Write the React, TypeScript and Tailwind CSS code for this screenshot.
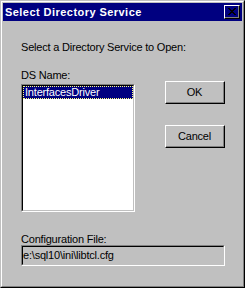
import type { ReactNode } from 'react';

function Button({ children, className = '' }: { children: ReactNode; className?: string }) {
  return (
    <div
      className={`border-t border-l border-t-white border-l-white border-r border-b border-r-black border-b-black ${className}`}
    >
      <div className="flex h-full w-full items-center justify-center border-r border-b border-r-[#808080] border-b-[#808080] text-[11px] tracking-[-0.2px] text-black">
        {children}
      </div>
    </div>
  );
}

function CloseGlyph() {
  // classic 8x7 pixel "x"
  const px: [number, number][] = [
    [0, 0], [1, 0], [6, 0], [7, 0],
    [1, 1], [2, 1], [5, 1], [6, 1],
    [2, 2], [3, 2], [4, 2], [5, 2],
    [3, 3], [4, 3],
    [2, 4], [3, 4], [4, 4], [5, 4],
    [1, 5], [2, 5], [5, 5], [6, 5],
    [0, 6], [1, 6], [6, 6], [7, 6],
  ];
  return (
    <svg width="8" height="7" viewBox="0 0 8 7" shapeRendering="crispEdges">
      {px.map(([x, y]) => (
        <rect key={`${x}-${y}`} x={x} y={y} width="1" height="1" fill="#000" />
      ))}
    </svg>
  );
}

function Sunken({ children, className = '' }: { children: ReactNode; className?: string }) {
  return (
    <div
      className={`border-t border-l border-t-[#808080] border-l-[#808080] border-r border-b border-r-white border-b-white ${className}`}
    >
      <div className="h-full w-full border-t border-l border-t-black border-l-black border-r border-b border-r-[#c0c0c0] border-b-[#c0c0c0]">
        {children}
      </div>
    </div>
  );
}

export default function App() {
  return (
    <div className="h-[288px] w-[245px] font-['Liberation_Sans',Arial,sans-serif]">
      <div className="h-full w-full border-t border-l border-t-[#c0c0c0] border-l-[#c0c0c0] border-r border-b border-r-black border-b-black bg-[#c0c0c0]">
        <div className="flex h-full w-full flex-col border-t border-l border-t-white border-l-white border-r border-b border-r-[#808080] border-b-[#808080] p-px">
          <div className="flex h-[18px] shrink-0 items-center justify-between bg-[#000080] pl-[2px] pr-[2px]">
            <span className="text-[11px] font-bold tracking-[0.45px] text-white">
              Select Directory Service
            </span>
            <Button className="h-[14px] w-[16px]">
              <CloseGlyph />
            </Button>
          </div>

          <div className="flex flex-col pl-[18px] text-[11px] tracking-[-0.2px] text-black">
            <p className="mt-[20px] h-[13px] leading-[13px]">Select a Directory Service to Open:</p>

            <div className="mt-[15px] flex gap-[30px]">
              <div className="flex w-[114px] flex-col">
                <p className="h-[13px] leading-[13px]">DS Name:</p>
                <Sunken className="mt-[2px] h-[128px] w-[114px]">
                  <div className="h-full bg-white">
                    <div className="flex h-[13px] items-center border border-dotted border-[#ffff7f] bg-[#000080] pl-[1px] leading-[13px] text-white">
                      InterfacesDriver
                    </div>
                  </div>
                </Sunken>
              </div>

              <div className="flex flex-col">
                <Button className="mt-[12px] h-[23px] w-[60px]">OK</Button>
                <Button className="mt-[21px] h-[23px] w-[60px]">Cancel</Button>
              </div>
            </div>

            <p className="mt-[22px] h-[11px] leading-[11px]">Configuration File:</p>
            <Sunken className="h-[21px] w-[204px]">
              <div className="flex h-full items-center bg-[#c0c0c0] pl-[0px]">e:\sql10\ini\libtcl.cfg</div>
            </Sunken>
          </div>
        </div>
      </div>
    </div>
  );
}
